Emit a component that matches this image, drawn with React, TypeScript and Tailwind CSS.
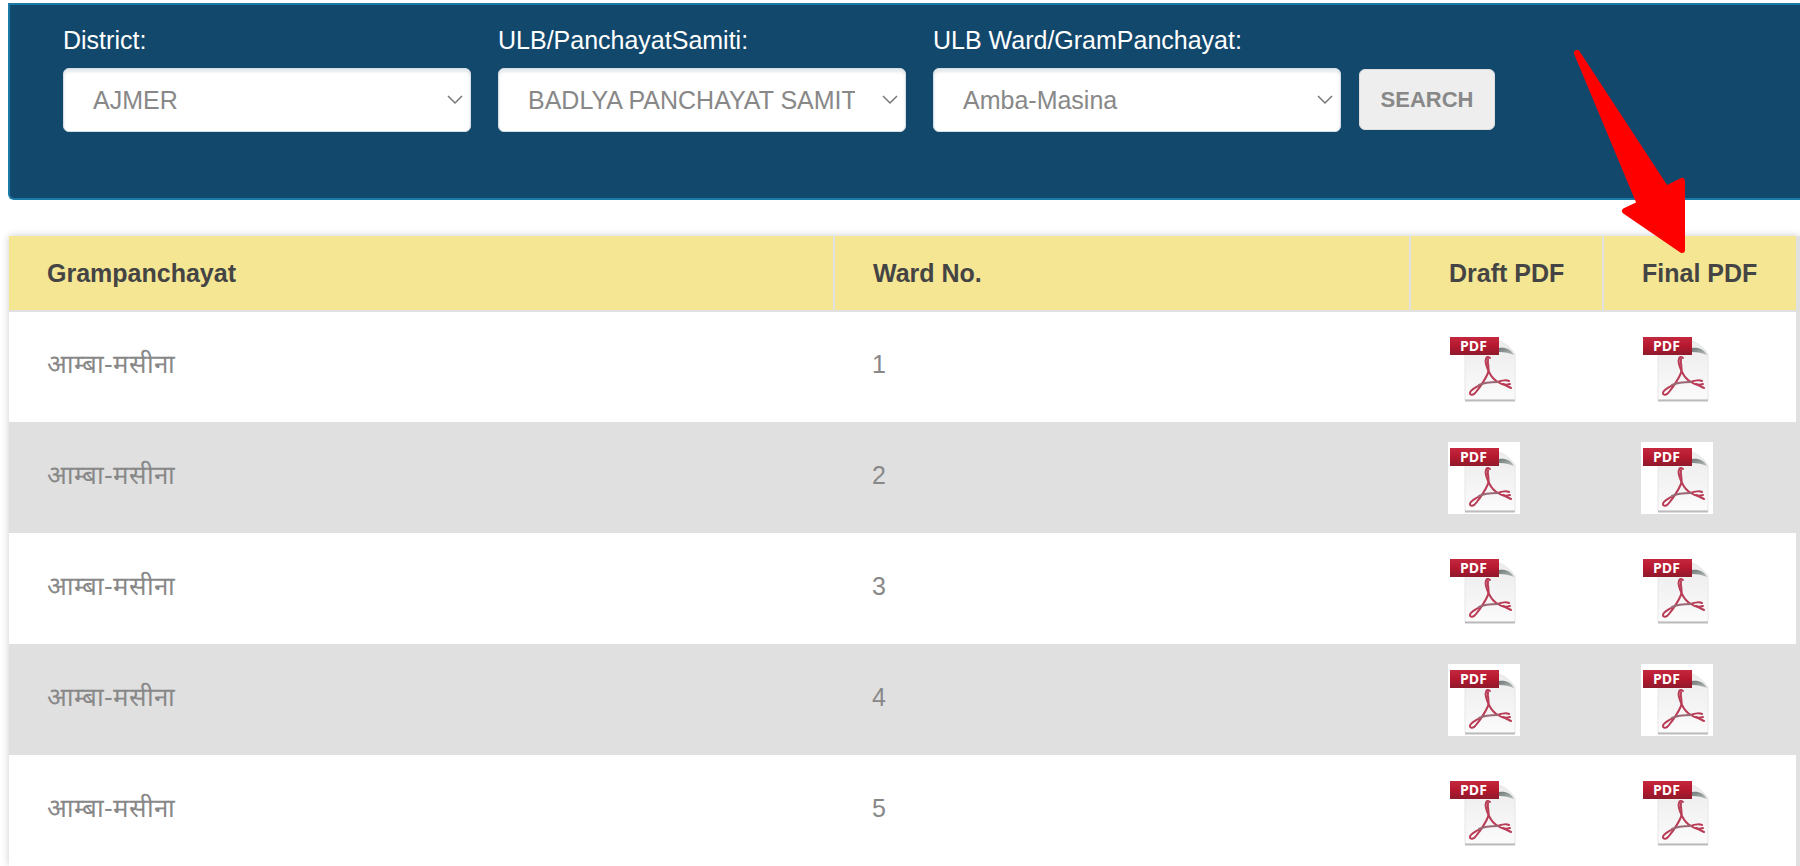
const filters = [
  { id: "district", label: "District:", value: "AJMER" },
  { id: "samiti", label: "ULB/PanchayatSamiti:", value: "BADLYA PANCHAYAT SAMITI" },
  { id: "ward", label: "ULB Ward/GramPanchayat:", value: "Amba-Masina" },
]

const rows = [1, 2, 3, 4, 5].map((ward) => ({ name: "आम्बा-मसीना", ward }))

const headers = ["Grampanchayat", "Ward No.", "Draft PDF", "Final PDF"]

function PdfIcon() {
  return (
    <svg viewBox="0 0 72 72" className="block size-[72px]" aria-hidden="true">
      <defs>
        <linearGradient id="page" x1="0" y1="0" x2="0" y2="1">
          <stop offset="0" stopColor="#ececec" />
          <stop offset="1" stopColor="#fbfbfb" />
        </linearGradient>
        <linearGradient id="band" x1="0" y1="0" x2="0" y2="1">
          <stop offset="0" stopColor="#c4283f" />
          <stop offset="0.5" stopColor="#b5182f" />
          <stop offset="1" stopColor="#8f1a2c" />
        </linearGradient>
        <linearGradient id="fold" x1="0" y1="0" x2="1" y2="1">
          <stop offset="0" stopColor="#6f7977" />
          <stop offset="1" stopColor="#b9bfbd" />
        </linearGradient>
      </defs>
      <rect width="72" height="72" fill="#fff" />
      {/* Page with folded corner */}
      <path d="M17 10H51C57 12 63 17 67 23V69H17Z" fill="url(#page)" stroke="#e6e6e6" />
      <path d="M17 69.500H67" stroke="#bbb" strokeWidth="2" />
      <path d="M51 17C57 16 63 18 66 24C61 22 57 21 51 21Z" fill="url(#fold)" />
      {/* Acrobat mark */}
      <g fill="none" stroke="#b93b55" strokeWidth="2" strokeLinecap="round" strokeLinejoin="round">
        <path d="M42 27C38 24 37 29 38 33C39 37 40 39 41 41C43 45 46 49 50 51C54 54 59 54 62 53" />
        <path d="M40 28C39 33 42 37 40 42C37 49 32 56 28 61C26 64 22 65 22 62C22 59 27 57 30 55" />
        <path d="M50 51C54 49 59 49 61 50M55 53L63 57" />
        <path d="M31 54C37 51 43 51 50 51" stroke="#9a6874" />
      </g>
      <rect x="2" y="6" width="49" height="18" fill="url(#band)" />
      <text x="12" y="20" fill="#fff" className="font-['Open_Sans',sans-serif] text-[14px] font-bold">
        PDF
      </text>
    </svg>
  )
}

function Arrow() {
  return (
    <svg
      viewBox="0 0 120 212"
      className="pointer-events-none absolute right-[108px] top-[46px] h-[212px] w-[120px]"
      aria-hidden="true"
    >
      <path
        d="M5 7L94 143L110 135V204L53 165L68 158Z"
        fill="#f00"
        stroke="#f00"
        strokeWidth="6"
        strokeLinejoin="round"
      />
    </svg>
  )
}

export default function App() {
  return (
    <main className="relative overflow-hidden bg-white pl-2 pt-[3px] font-['Liberation_Sans',Arial,sans-serif] text-[25px] leading-9 text-[#888]">
      <form
        className="flex h-[197px] items-start rounded-bl-md border-2 border-r-0 border-[#1a7ba6] bg-[#13486d] pl-[53px] pt-[17px]"
        onSubmit={(e) => e.preventDefault()}
      >
        <div className="flex gap-[27px]">
          {filters.map((filter) => (
            <div key={filter.id} className="w-[408px]">
              <label htmlFor={filter.id} className="mb-[10px] block text-white">
                {filter.label}
              </label>
              <div className="relative">
                <select
                  id={filter.id}
                  className="block h-16 w-full appearance-none rounded-md border border-[#d5dee5] bg-white pl-[29px] pr-[50px] text-[#888] shadow-[inset_0_3px_3px_#e4e9ec]"
                >
                  <option>{filter.value}</option>
                </select>
                <svg
                  viewBox="0 0 16 10"
                  className="pointer-events-none absolute right-2 top-[27px] h-[10px] w-4"
                  fill="none"
                  stroke="#777"
                  strokeWidth="1.500"
                  aria-hidden="true"
                >
                  <path d="M1 1L8 8L15 1" />
                </svg>
              </div>
            </div>
          ))}
        </div>
        <button
          type="submit"
          className="ml-[18px] mt-[47px] h-[61px] w-[136px] rounded-md border border-[#ddd] bg-[#eee] text-[22px] font-bold text-[#888]"
        >
          SEARCH
        </button>
      </form>

      <div className="ml-px mt-9 bg-[#e0e0e0] pr-1 shadow-[0_0_8px_#0003]">
        <table className="w-full table-fixed border-collapse bg-white text-left">
          <colgroup>
            <col />
            <col className="w-[576px]" />
            <col className="w-[193px]" />
            <col className="w-[193px]" />
          </colgroup>
          <thead>
            <tr className="h-[75px] border-b-2 border-[#e0e0e0] bg-[#f4e693] text-[#444]">
              {headers.map((header) => (
                <th
                  key={header}
                  className="whitespace-nowrap border-r-2 border-[#e0e0e0] pl-[38px] last:border-r-0"
                >
                  {header}
                </th>
              ))}
            </tr>
          </thead>
          <tbody>
            {rows.map((row) => (
              <tr key={row.ward} className="h-[111px] even:bg-[#e0e0e0]">
                <td className="pb-1.5 pl-[38px] text-[26px]">{row.name}</td>
                <td className="pb-1.5 pl-[38px]">{row.ward}</td>
                <td className="pl-[38px]">
                  <a href="#draft" aria-label={`Draft PDF, ward ${row.ward}`} className="block w-[72px]">
                    <PdfIcon />
                  </a>
                </td>
                <td className="pl-[38px]">
                  <a href="#final" aria-label={`Final PDF, ward ${row.ward}`} className="block w-[72px]">
                    <PdfIcon />
                  </a>
                </td>
              </tr>
            ))}
          </tbody>
        </table>
      </div>

      <Arrow />
    </main>
  )
}
